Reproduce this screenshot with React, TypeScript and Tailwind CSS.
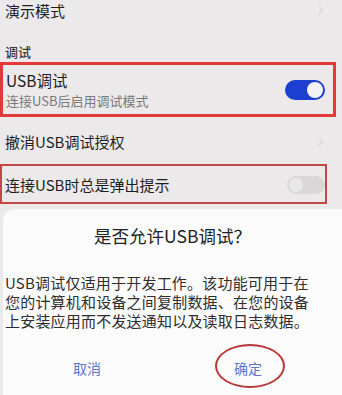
import { ChevronRight } from 'lucide-react'

const font = { fontFamily: '"Noto Sans CJK SC", "Noto Sans", sans-serif' }

function Toggle({ on }: { on: boolean }) {
  if (on) {
    return (
      <div className="w-[40px] h-[20px] rounded-full bg-[#1c3fcf] flex items-center justify-end pr-[2px]">
        <div className="w-[16px] h-[16px] rounded-full bg-[#f4f4f8]" />
      </div>
    )
  }
  return (
    <div className="w-[38px] h-[18px] rounded-full bg-[#d9d7d7] flex items-center pl-[2px]">
      <div className="w-[14px] h-[14px] rounded-full bg-[#e9e8e8]" />
    </div>
  )
}

export default function App() {
  return (
    <div
      className="w-[342px] h-[395px] overflow-hidden bg-[#ebe9ea] flex flex-col text-[#1e1e1e]"
      style={font}
    >
      <div className="h-[20px] flex items-center justify-between pl-[5px] pr-[14px]">
        <span className="text-[15px] leading-none">演示模式</span>
        <ChevronRight className="w-[14px] h-[14px] text-[#c4c2c4]" strokeWidth={1.5} />
      </div>

      <div className="h-[42px] flex items-end pb-[4px] pl-[5px]">
        <span className="text-[13px] leading-none text-[#3a3a3a] font-medium">调试</span>
      </div>

      <div className="h-[55px] w-[336px] border-[3px] border-[#e23a3a] flex items-center justify-between pl-[3px] pr-[8px]">
        <div className="flex flex-col pt-[1px]">
          <div className="text-[15.5px] leading-[19px]">USB调试</div>
          <div className="mt-[2px] text-[13px] leading-[17px] text-[#7a7a7c]">连接USB后启用调试模式</div>
        </div>
        <Toggle on />
      </div>

      <div className="h-[47px] flex items-center justify-between pl-[5px] pr-[14px] pt-[2px]">
        <span className="text-[15px] leading-none">撤消USB调试授权</span>
        <ChevronRight className="w-[14px] h-[14px] text-[#c4c2c4]" strokeWidth={1.5} />
      </div>

      <div className="h-[40px] w-[327px] border-2 border-[#c24848] flex items-center justify-between pl-[3px] pt-[1px]">
        <span className="text-[15px] leading-none">连接USB时总是弹出提示</span>
        <Toggle on={false} />
      </div>

      <div className="mt-[5px] ml-[3px] flex-1 bg-[#fbfbfb] rounded-tl-[12px] flex flex-col relative">
        <div className="h-[52px] flex items-center justify-center pt-[2px]">
          <span className="text-[17.5px] leading-none text-[#222]">是否允许USB调试？</span>
        </div>
        <div className="mt-[12px] pl-[2px] text-[15px] leading-[19px] tracking-[0.2px] text-[#2e2e2e]">
          <div className="whitespace-nowrap">USB调试仅适用于开发工作。该功能可用于在</div>
          <div className="whitespace-nowrap">您的计算机和设备之间复制数据、在您的设备</div>
          <div className="whitespace-nowrap">上安装应用而不发送通知以及读取日志数据。</div>
        </div>
        <div className="mt-[18px] h-[40px] flex items-center">
          <div className="w-[168px] flex justify-center">
            <span className="text-[14px] text-[#5a77d0]">取消</span>
          </div>
          <div className="w-[154px] flex justify-center">
            <span className="text-[14px] text-[#5a77d0]">确定</span>
          </div>
        </div>
        <div className="absolute left-[212px] top-[135px] w-[70px] h-[44px] rounded-[50%] border-2 border-[#b8383a]" />
      </div>
    </div>
  )
}
